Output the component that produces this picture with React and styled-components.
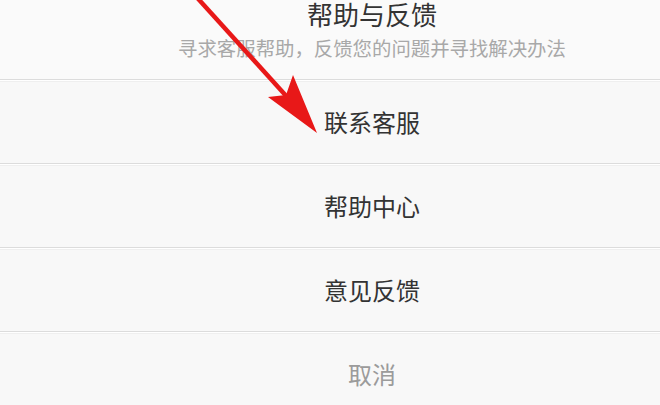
import React from "react";
import styled, { createGlobalStyle } from "styled-components";

const Global = createGlobalStyle`
  html, body {
    margin: 0;
    padding: 0;
    background: #f8f8f8;
    overflow: hidden;
  }
  body {
    font-family: "Noto Sans CJK SC", "Noto Sans", sans-serif;
  }
`;

const Page = styled.div`
  position: relative;
  width: 660px;
  height: 405px;
  overflow: hidden;
  background: #f8f8f8;
`;

const Sheet = styled.div`
  display: flex;
  flex-direction: column;
`;

const Header = styled.div`
  height: 79px;
  display: flex;
  flex-direction: column;
  justify-content: flex-end;
  align-items: center;
  gap: 9px;
  padding: 0 0 21px 84px;
  box-sizing: border-box;
  overflow: hidden;
  background: #fafafa;
`;

const Title = styled.div`
  font-size: 26px;
  line-height: 30px;
  color: #333;
  white-space: nowrap;
`;

const Subtitle = styled.div`
  font-size: 19.4px;
  line-height: 20px;
  color: #a8a8a8;
  white-space: nowrap;
`;

const Row = styled.div`
  height: 84px;
  box-sizing: border-box;
  display: flex;
  align-items: center;
  justify-content: center;
  padding-left: 84px;
  border-top: 1px solid #dcdcdc;
  box-shadow: inset 0 1px 0 #ffffff, inset 0 2px 0 #efefef;
  background: #f8f8f8;
  font-size: 24px;
  color: ${(p) => (p.$muted ? "#9b9b9b" : "#333")};
`;

const Arrow = styled.svg`
  position: absolute;
  left: 0;
  top: 0;
  pointer-events: none;
`;

export default function App() {
  const items = ["联系客服", "帮助中心", "意见反馈"];
  return (
    <>
      <Global />
      <Page>
        <Sheet>
          <Header>
            <Title>帮助与反馈</Title>
            <Subtitle>寻求客服帮助，反馈您的问题并寻找解决办法</Subtitle>
          </Header>
          {items.map((t) => (
            <Row key={t}>{t}</Row>
          ))}
          <Row $muted>取消</Row>
        </Sheet>
        <Arrow width="660" height="405" viewBox="0 0 660 405">
          <line x1="192" y1="-8" x2="288" y2="98" stroke="#e81818" strokeWidth="4.5" />
          <path d="M317 133 L268 97 L286 95 L293 75 Z" fill="#e81818" />
        </Arrow>
      </Page>
    </>
  );
}
